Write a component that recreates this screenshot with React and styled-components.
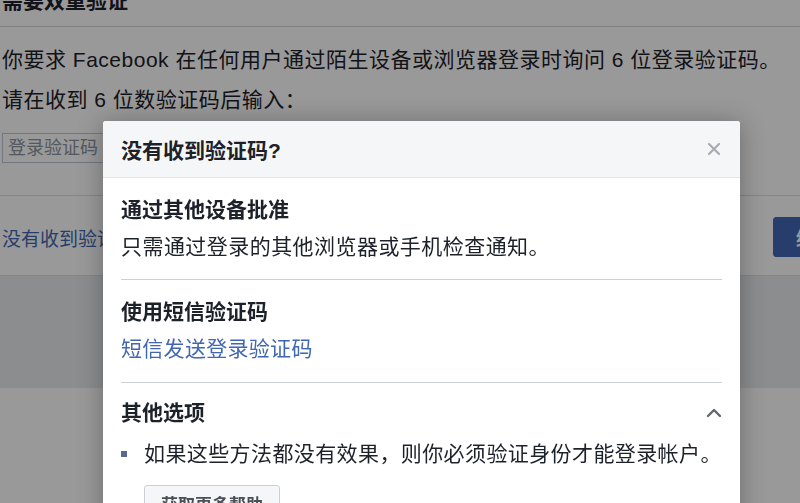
import React from 'react';
import styled, { createGlobalStyle } from 'styled-components';

const GlobalStyle = createGlobalStyle`
  html, body {
    margin: 0;
    padding: 0;
    overflow: hidden;
    background: #ffffff;
  }
  body {
    font-family: 'Liberation Sans', 'Noto Sans CJK SC', sans-serif;
    color: #1d2129;
  }
`;

const Page = styled.div`
  margin-top: -28px;
  width: 857px;
  height: 560px;
  background: #ffffff;
`;

const PageHeader = styled.div`
  height: 54px;
  display: flex;
  align-items: center;
  padding-left: 2px;
  border-bottom: 1px solid #d3d6db;
  font-size: 21px;
  font-weight: bold;
`;

const PageBody = styled.div`
  padding: 13px 0 32px 2px;
  border-bottom: 1px solid #dddfe2;
`;

const Para = styled.p`
  margin: 0;
  font-size: 21px;
  line-height: 40px;
  letter-spacing: 0.5px;
`;

const CodeInput = styled.input`
  margin-top: 13px;
  width: 240px;
  height: 30px;
  box-sizing: border-box;
  border: 1px solid #bdc7d8;
  padding: 0 5px;
  font-size: 18px;
  font-family: inherit;
  &::placeholder {
    color: #8d949e;
  }
`;

const Actions = styled.div`
  display: flex;
  align-items: center;
  justify-content: space-between;
  padding: 21px 0 18px 0;
  border-bottom: 1px solid #dddfe2;
`;

const PageLink = styled.a`
  font-size: 19px;
  color: #4267b2;
  text-decoration: none;
  padding-left: 2px;
`;

const PrimaryButton = styled.button`
  height: 40px;
  padding: 0 22px;
  background: #4267b2;
  border: 1px solid #4267b2;
  border-radius: 3px;
  color: #fff;
  font-size: 19px;
  font-weight: bold;
  font-family: inherit;
`;

const Footer = styled.div`
  height: 112px;
  background: #e9ebee;
`;

const Overlay = styled.div`
  position: fixed;
  inset: 0;
  background: rgba(0, 0, 0, 0.4);
`;

const Dialog = styled.div`
  position: fixed;
  left: 103px;
  top: 121px;
  width: 637px;
  background: #fff;
  border-radius: 3px;
  box-shadow: 0 2px 26px rgba(0, 0, 0, 0.3);
  overflow: hidden;
`;

const DialogHeader = styled.div`
  height: 56px;
  display: flex;
  align-items: center;
  justify-content: space-between;
  padding: 0 18px;
  background: #f5f6f7;
  border-bottom: 1px solid #e5e5e5;
`;

const DialogTitle = styled.h2`
  margin: 0;
  font-size: 21px;
  font-weight: bold;
  color: #1d2129;
`;

const IconButton = styled.span`
  display: flex;
  width: 16px;
  height: 16px;
  align-items: center;
  justify-content: center;
`;

const DialogBody = styled.div`
  padding: 0 18px 40px;
`;

const Section = styled.div`
  padding: ${(p) => p.$top}px 0 ${(p) => p.$bottom}px;
  border-bottom: ${(p) => (p.$last ? 'none' : '1px solid #ccd0d5')};
`;

const SectionHead = styled.div`
  display: flex;
  align-items: center;
  justify-content: space-between;
  height: 30px;
`;

const SectionTitle = styled.h3`
  margin: 0;
  font-size: 21px;
  font-weight: bold;
  line-height: 30px;
`;

const SectionText = styled.div`
  margin-top: 7px;
  font-size: 21px;
  line-height: 30px;
  letter-spacing: 0.45px;
`;

const SmsLink = styled.a`
  display: block;
  margin-top: 7px;
  font-size: 21px;
  line-height: 30px;
  letter-spacing: 0.3px;
  color: #4267b2;
  text-decoration: none;
`;

const BulletList = styled.ul`
  margin: 11px 0 0;
  padding: 0;
  list-style: none;
`;

const Bullet = styled.li`
  display: flex;
  align-items: center;
  font-size: 21px;
  line-height: 30px;
  letter-spacing: 0.4px;

  &:before {
    content: '';
    width: 6px;
    height: 6px;
    margin-right: 17px;
    background: #566a94;
  }
`;

const HelpButton = styled.button`
  margin: 16px 0 0 23px;
  height: 36px;
  padding: 0 16px;
  background: #f5f6f7;
  border: 1px solid #ccd0d5;
  border-radius: 3px;
  font-size: 17px;
  font-weight: bold;
  color: #4b4f56;
  font-family: inherit;
`;

const App = () => (
  <>
    <GlobalStyle />
    <Page>
      <PageHeader>需要双重验证</PageHeader>
      <PageBody>
        <Para>你要求 Facebook 在任何用户通过陌生设备或浏览器登录时询问 6 位登录验证码。</Para>
        <Para>请在收到 6 位数验证码后输入：</Para>
        <CodeInput placeholder="登录验证码" />
      </PageBody>
      <Actions>
        <PageLink href="#">没有收到验证码？</PageLink>
        <PrimaryButton>继续</PrimaryButton>
      </Actions>
      <Footer />
    </Page>
    <Overlay />
    <Dialog>
      <DialogHeader>
        <DialogTitle>没有收到验证码?</DialogTitle>
        <IconButton>
          <svg width="14" height="14" viewBox="0 0 14 14">
            <path d="M2 2 L12 12 M12 2 L2 12" stroke="#a8acb2" strokeWidth="2.2" strokeLinecap="round" />
          </svg>
        </IconButton>
      </DialogHeader>
      <DialogBody>
        <Section $top={17} $bottom={17}>
          <SectionTitle>通过其他设备批准</SectionTitle>
          <SectionText>只需通过登录的其他浏览器或手机检查通知。</SectionText>
        </Section>
        <Section $top={17} $bottom={18}>
          <SectionTitle>使用短信验证码</SectionTitle>
          <SmsLink href="#">短信发送登录验证码</SmsLink>
        </Section>
        <Section $top={15} $bottom={16} $last>
          <SectionHead>
            <SectionTitle>其他选项</SectionTitle>
            <IconButton>
              <svg width="16" height="10" viewBox="0 0 16 10">
                <path d="M2 8 L8 2 L14 8" fill="none" stroke="#606770" strokeWidth="2.4" strokeLinecap="round" strokeLinejoin="round" />
              </svg>
            </IconButton>
          </SectionHead>
          <BulletList>
            <Bullet>如果这些方法都没有效果，则你必须验证身份才能登录帐户。</Bullet>
          </BulletList>
          <HelpButton>获取更多帮助</HelpButton>
        </Section>
      </DialogBody>
    </Dialog>
  </>
);

export default App;
